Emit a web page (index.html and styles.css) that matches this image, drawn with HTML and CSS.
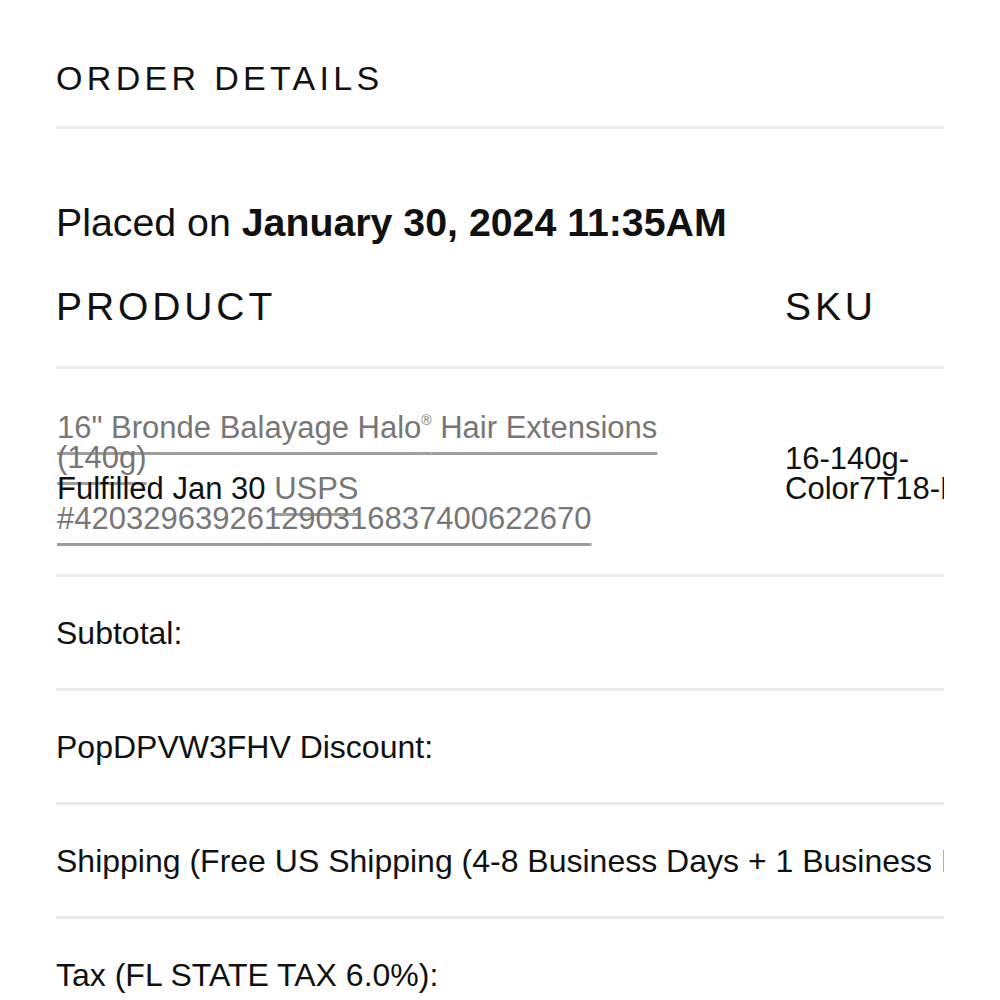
FILE: index.html
```html
<!DOCTYPE html>
<html lang="en">

<head>
    <meta charset="UTF-8">
    <meta name="viewport" content="width=device-width, initial-scale=1.0">
    <title>Order Details</title>
    <link rel="stylesheet" href="styles.css">
</head>

<body>

    <main class="order">
        <h1 class="order-title">ORDER DETAILS</h1>

        <p class="placed">Placed on <strong>January 30, 2024 11:35AM</strong></p>

        <!-- Line items -->
        <div class="items">
            <div class="items-head">
                <div class="col-product">PRODUCT</div>
                <div class="col-sku">SKU</div>
                <div class="col-qty">QUANTITY</div>
            </div>

            <div class="item-row">
                <div class="col-product">
                    <a class="link" href="#">16" Bronde Balayage Halo<span class="reg">&reg;</span> Hair Extensions (140g)</a>
                    <div class="fulfilled">Fulfilled Jan 30 <a class="link" href="#">USPS #420329639261290316837400622670</a></div>
                </div>
                <div class="col-sku">16-140g-Color7T18-HALO</div>
                <div class="col-qty">1</div>
            </div>

            <!-- Totals -->
            <div class="total-row">Subtotal:</div>
            <div class="total-row">PopDPVW3FHV Discount:</div>
            <div class="total-row">Shipping (Free US Shipping (4-8 Business Days + 1 Business Day Processing)):</div>
            <div class="total-row">Tax (FL STATE TAX 6.0%):</div>
        </div>
    </main>

</body>

</html>
```

FILE: styles.css
```css
/* Basic layout */
body {
    margin: 0;
    background-color: #fff;
    color: #111;
    font-family: "Liberation Sans", Arial, sans-serif;
}

.order {
    padding: 58px 56px 0;
}

/* Title */
.order-title {
    margin: 0;
    padding-bottom: 28px;
    font-size: 34px;
    line-height: 40px;
    font-weight: normal;
    letter-spacing: 0.127em;
    border-bottom: 3px solid #ebebeb;
}

.placed {
    margin: 71px 0 0;
    font-size: 39.3px;
    line-height: 44px;
}

/* Items table */
.items {
    margin-top: 40px;
    overflow: hidden;
}

.items-head,
.item-row {
    display: flex;
    border-bottom: 3px solid #ebebeb;
}

.items-head {
    padding-bottom: 36px;
    font-size: 39px;
    line-height: 46px;
    letter-spacing: 0.1em;
}

.col-product {
    flex: 0 0 729px;
}

.col-sku {
    flex: 0 0 240px;
}

.col-qty {
    flex: 0 0 200px;
}

.item-row {
    align-items: center;
    padding: 44px 0 40px;
    font-size: 31px;
    line-height: 30px;
}

.item-row .col-product {
    box-sizing: border-box;
    padding-right: 62px;
    padding-left: 1px;
}

.link {
    color: #777;
    text-decoration: underline;
    text-decoration-color: #9e9e9e;
    text-decoration-thickness: 3px;
    text-underline-offset: 14px;
}

.reg {
    font-size: 0.45em;
    vertical-align: 0.9em;
    line-height: 0;
}

.fulfilled {
    margin-top: 1px;
    color: #111;
}

/* Totals */
.total-row {
    padding: 37px 0 36px;
    font-size: 32px;
    line-height: 38px;
    white-space: nowrap;
    border-bottom: 3px solid #ebebeb;
}
```
